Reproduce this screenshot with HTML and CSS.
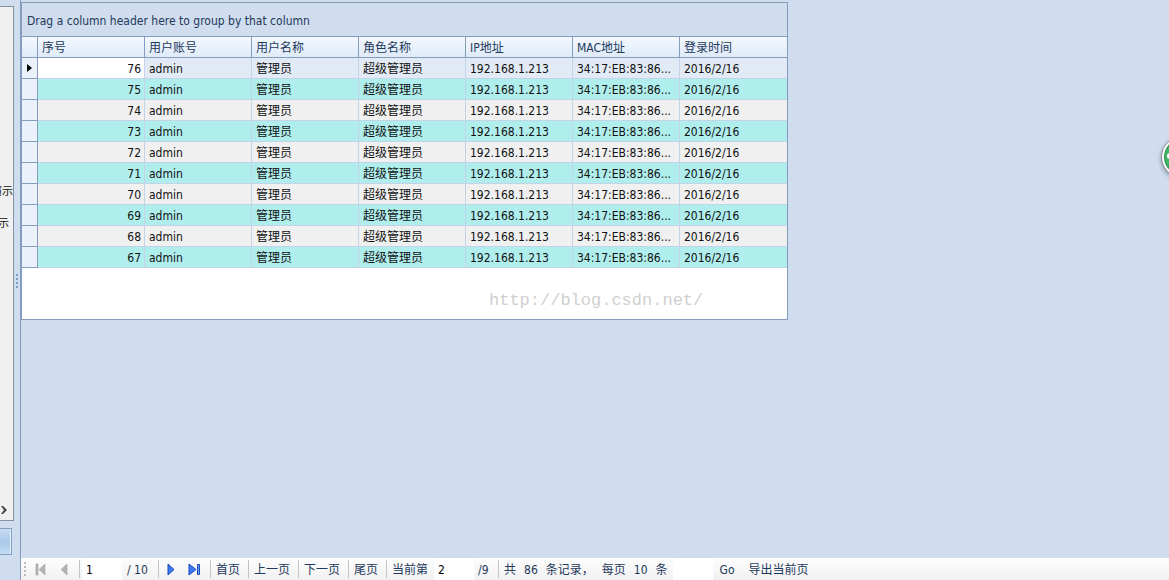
FILE: index.html
```html
<!DOCTYPE html>
<html lang="zh-CN">
<head>
<meta charset="utf-8">
<title>登录日志</title>
<link rel="stylesheet" href="styles.css">
</head>
<body>
<div class="app">
  <aside class="side">
    <div class="tree">
      <ul class="nodes"><li class="node">演示</li><li class="node node-short">示</li></ul>
      <button class="scroll" aria-label="向右滚动"><svg width="8" height="10" viewBox="0 0 8 10"><path d="M1 1h2l4 4-4 4H1l3-4z" fill="#444"/></svg></button>
    </div>
    <button class="nav" aria-label="导航"></button>
    <div class="dots"></div>
  </aside>
  <div class="splitter"><svg width="3" height="15" viewBox="0 0 3 15"><path d="M0 0h2v2H0zM0 4h2v2H0zM0 8h2v2H0zM0 12h2v2H0z" fill="#7f9cc4"/></svg></div>
  <main class="main">
    <section class="grid">
      <div class="group">Drag a column header here to group by that column</div>
      <table class="table">
        <colgroup><col class="mark"><col><col><col><col><col><col><col></colgroup>
        <thead><tr><th></th><th>序号</th><th>用户账号</th><th>用户名称</th><th>角色名称</th><th>IP地址</th><th>MAC地址</th><th>登录时间</th></tr></thead>
        <tbody id="rows"></tbody>
      </table>
      <div class="watermark">http://blog.csdn.net/</div>
    </section>
    <div class="space"></div>
    <nav class="bar">
      <svg class="grip" width="2" height="14" viewBox="0 0 2 14"><path d="M0 0h2v2H0zM0 4h2v2H0zM0 8h2v2H0zM0 12h2v2H0z" fill="#b9bdc4"/></svg>
      <button class="icon first" aria-label="第一页"><svg width="12" height="13" viewBox="0 0 12 13"><path d="M1 1h2v11H1zM10 1v11L4 6.500z" fill="#b4b4b4" stroke="#a0a0a0" stroke-width=".6"/></svg></button>
      <button class="icon prev" aria-label="前一页"><svg width="8" height="13" viewBox="0 0 8 13"><path d="M7 1v11L1 6.500z" fill="#b4b4b4" stroke="#a0a0a0" stroke-width=".6"/></svg></button>
      <span class="sep"></span>
      <input class="box" aria-label="页码" value="1">
      <span class="total">/ 10</span>
      <span class="sep"></span>
      <button class="icon next" aria-label="后一页"><svg width="8" height="13" viewBox="0 0 8 13"><path d="M1 1v11l6-5.500z" fill="#3c78ee" stroke="#1c48c0"/></svg></button>
      <button class="icon last" aria-label="最后一页"><svg width="13" height="13" viewBox="0 0 13 13"><path d="M1 1v11l7-5.500z" fill="#3c78ee" stroke="#1c48c0"/><path d="M9.500 1.500h2v10h-2z" fill="#6fa0f4" stroke="#1c48c0"/></svg></button>
      <span class="sep"></span>
      <button class="text">首页</button><span class="sep"></span>
      <button class="text">上一页</button><span class="sep"></span>
      <button class="text">下一页</button><span class="sep"></span>
      <button class="text">尾页</button><span class="sep"></span>
      <label class="text" for="current">当前第</label>
      <input class="box" id="current" value="2">
      <span class="pages">/9</span>
      <span class="sep"></span>
      <span class="stat">共</span><span class="stat">86</span><span class="stat record">条记录，</span><span class="stat">每页</span><span class="stat">10</span><label class="stat" for="size">条</label>
      <input class="box" id="size">
      <button class="go">Go</button>
      <button class="export">导出当前页</button>
    </nav>
  </main>
  <button class="float" aria-label="悬浮球"><svg width="44" height="44" viewBox="0 0 44 44"><circle cx="22" cy="22" r="21" fill="#8c9098"/><circle cx="22" cy="22" r="20" fill="#fff"/><circle cx="22" cy="22" r="18" fill="#258f48"/><circle cx="22" cy="22" r="17" fill="#42b663"/><circle cx="10" cy="21" r="3" fill="#fff"/></svg></button>
</div>
<script src="app.js"></script>
</body>
</html>
```

FILE: styles.css
```css
* { box-sizing: border-box; }
body {
  margin: 0;
  font: 12px/20px "DejaVu Sans Condensed", "Noto Sans", "Noto Sans CJK SC", sans-serif;
  color: #1e395b;
  background: #cfddee;
}
button, input { font: inherit; color: inherit; border: 0; padding: 0; margin: 0; background: none; }
svg { display: block; }
.app { display: flex; height: 100vh; position: relative; overflow: hidden; }
.side { width: 14px; flex: none; display: flex; flex-direction: column; padding-top: 6px; overflow: hidden; }
.tree {
  flex: 1;
  display: flex;
  flex-direction: column;
  justify-content: space-between;
  background: #f0f0f0;
  border: solid #8592a5;
  border-width: 1px 1px 1px 0;
}
.nodes { list-style: none; margin: 0; padding: 175px 0 0; color: #111; font-size: 11px; }
.node { display: flex; justify-content: flex-end; height: 32px; white-space: nowrap; }
.node-short { padding-right: 4px; }
.scroll { height: 20px; }
.nav {
  height: 27px;
  margin: 7px 2px 0 0;
  border: solid #859fc2;
  border-width: 1px 1px 1px 0;
  background: linear-gradient(#c8dcf2, #a9c9e9 50%, #c4dcf3);
  box-shadow: inset -1px 0 #e8f2fc;
}
.dots { height: 25px; }
.splitter { width: 7px; flex: none; display: flex; align-items: center; justify-content: center; padding-bottom: 18px; border-right: 1px solid #849dbd; }
.main { flex: 1; min-width: 0; display: flex; flex-direction: column; padding-top: 2px; }
.grid { width: 767px; max-width: 100%; background: #fff; border: 1px solid #849dbd; }
.group { padding: 8px 5px 5px; background: #cfddee; }
.table { width: 100%; table-layout: fixed; border-collapse: separate; border-spacing: 0; color: #111; }
.mark { width: 16px; }
th, td { height: 21px; padding: 2px 3px 0 4px; line-height: 18px; text-align: left; font-weight: 400; overflow: hidden; white-space: nowrap; border: solid #c4d4e8; border-width: 0 1px 1px 0; }
th { height: 22px; color: #1e395b; background: linear-gradient(#f3f8fe, #dfebf8); border-color: #849dbd; border-top-width: 1px; }
th:last-child, td:last-child { border-right: 0; }
td:first-child { padding: 0 5px; border-color: #849dbd; }
td:nth-child(2) { text-align: right; }
tr:nth-child(odd) td { background: #f0f0f0; }
tr:nth-child(even) td { background: #b0eeee; }
tr:first-child td { background: #e2eaf5; }
tr:first-child td:nth-child(2) { background: #fff; }
tbody tr td:first-child { background: #eaf1fa; }
.watermark { padding: 21px 0 6px 467px; font: 17px/24px "Liberation Mono", monospace; color: #d0d0d0; }
.space { flex: 1; }
.bar { height: 22px; display: flex; align-items: center; background: linear-gradient(#fdfdfd, #f1f1f1); white-space: nowrap; line-height: 22px; }
.bar > * { flex: none; }
.grip { margin: 0 9px 0 3px; }
.sep { width: 1px; height: 18px; background: #bfc4cc; }
.first { margin-right: 13px; }
.prev { margin-right: 11px; }
.box { width: 40px; height: 22px; padding: 2px 4px 0; background: #fff; color: #000; margin-left: 2px; }
.total { width: 36px; padding: 2px 0 0 5px; }
.next { margin: 0 13px 0 8px; }
.last { margin-right: 9px; }
.text { padding: 2px 8px 0 5px; }
.text + .box { margin-left: -2px; }
.pages { width: 24px; padding: 2px 0 0 4px; }
.stat { padding: 2px 3px 0 5px; }
.record { width: 56px; }
.go { margin: 2px 14px 0 7px; }
.export { margin-top: 2px; }
.float { position: absolute; right: -35px; top: 135px; filter: drop-shadow(0 2px 2px #8899aa); }
```

FILE: app.js
```js
const body = document.getElementById("rows");
for (let id = 76; id >= 67; id--) {
  const row = body.insertRow();
  const mark = row.insertCell();
  if (id === 76) mark.innerHTML = '<svg width="5" height="8" viewBox="0 0 5 8"><path d="M0 0l5 4-5 4z"/></svg>';
  for (const value of [id, "admin", "管理员", "超级管理员", "192.168.1.213", "34:17:EB:83:86...", "2016/2/16"]) {
    row.insertCell().textContent = value;
  }
}
```
